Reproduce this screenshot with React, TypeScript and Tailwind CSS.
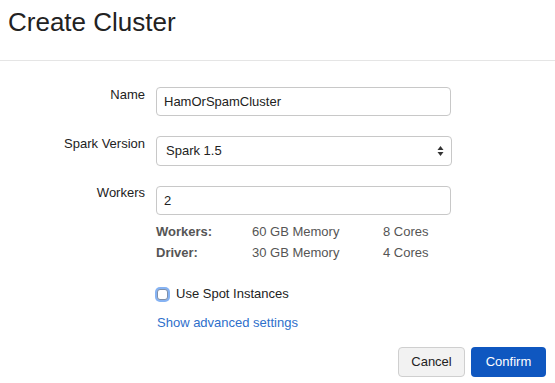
import React from "react";

export default function App() {
  const font = { fontFamily: '"Liberation Sans", Arial, sans-serif' };
  return (
    <div className="w-[555px] h-[383px] bg-white overflow-hidden text-[#333]" style={font}>
      <div className="h-[61px] border-b border-[#e5e5e5] pl-[8px] pt-[4px]">
        <h1 className="text-[26px] leading-[36px] text-[#222] font-normal">Create Cluster</h1>
      </div>
      <div className="pt-[26px] text-[13px]">
        {/* Name */}
        <div className="flex items-start">
          <label className="w-[145px] text-right leading-[18px] -mt-px text-[#222]">Name</label>
          <div className="ml-[11px] w-[295px] h-[29px] border border-[#c8c8c8] rounded-[4px] px-[7px] flex items-center text-[13px] text-[#222]">
            HamOrSpamCluster
          </div>
        </div>
        {/* Spark Version */}
        <div className="flex items-start mt-[20px]">
          <label className="w-[145px] text-right leading-[18px] -mt-px text-[#222]">Spark Version</label>
          <div className="ml-[11px] w-[296px] h-[30px] border border-[#c8c8c8] rounded-[4px] pl-[9px] pr-[7px] flex items-center justify-between text-[13px] text-[#222]">
            <span>Spark 1.5</span>
            <svg width="7" height="12" viewBox="0 0 7 12">
              <polygon points="3.5,1 6.5,5 0.5,5" fill="#333" />
              <polygon points="3.5,11 6.5,7 0.5,7" fill="#333" />
            </svg>
          </div>
        </div>
        {/* Workers */}
        <div className="flex items-start mt-[20px]">
          <label className="w-[145px] text-right leading-[18px] -mt-[2px] text-[#222]">Workers</label>
          <div className="ml-[11px] w-[295px]">
            <div className="h-[29px] border border-[#c8c8c8] rounded-[4px] px-[7px] flex items-center text-[13px] text-[#222]">
              2
            </div>
            <div className="mt-[6px] leading-[21px] text-[#555]">
              <div className="flex">
                <span className="w-[96px] font-bold">Workers:</span>
                <span className="w-[131px]">60 GB Memory</span>
                <span>8 Cores</span>
              </div>
              <div className="flex">
                <span className="w-[96px] font-bold">Driver:</span>
                <span className="w-[131px]">30 GB Memory</span>
                <span>4 Cores</span>
              </div>
            </div>
          </div>
        </div>
        {/* Checkbox */}
        <div className="flex items-center ml-[157px] mt-[23px] h-[16px]">
          <div className="w-[11px] h-[11px] rounded-[3px] border border-[#7f8fa8] bg-white ring-2 ring-[#86b3f3]" />
          <span className="ml-[8px] text-[#222] leading-[16px]">Use Spot Instances</span>
        </div>
        <div className="ml-[157px] mt-[12px] leading-[18px] text-[#2e6fcb]">Show advanced settings</div>
        {/* Buttons */}
        <div className="flex justify-end gap-[6px] pr-[9px] mt-[15px]">
          <button className="w-[67px] h-[30px] rounded-[4px] border border-[#cfcfcf] bg-[#f2f2f2] text-[13px] text-[#222]">
            Cancel
          </button>
          <button className="w-[75px] h-[30px] rounded-[4px] bg-[#0f57c0] text-[13px] text-white">
            Confirm
          </button>
        </div>
      </div>
    </div>
  );
}
